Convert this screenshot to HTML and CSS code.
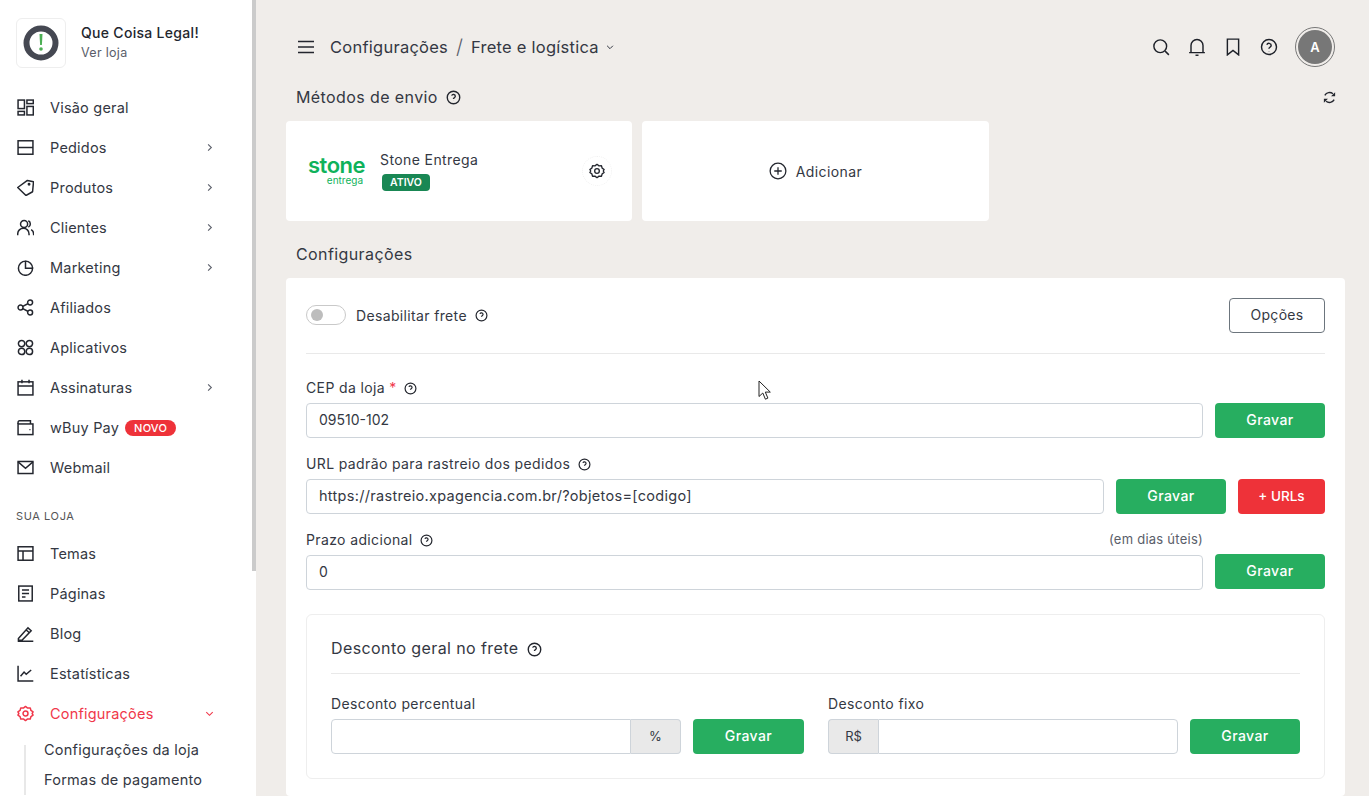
FILE: index.html
```html
<!DOCTYPE html>
<html lang="pt-BR">

<head>
    <meta charset="UTF-8">
    <meta name="viewport" content="width=device-width, initial-scale=1.0">
    <title>Frete e logística</title>
    <link rel="stylesheet" href="styles.css">
</head>

<body>
    <svg class="sprite" width="0" height="0">
        <symbol id="i-help" viewBox="0 0 24 24"><circle cx="12" cy="12" r="10"/><path d="M9.1 9a3 3 0 0 1 5.8 1c0 2-3 2.600-3 4.200"/><path d="M12 17.400v.1"/></symbol>
        <symbol id="i-chev" viewBox="0 0 24 24"><path d="M9 5l7 7-7 7"/></symbol>
        <symbol id="i-down" viewBox="0 0 24 24"><path d="M5 9l7 7 7-7"/></symbol>
        <symbol id="i-gear" viewBox="0 0 24 24"><path stroke-linejoin="round" d="M12 2l3 2.300 3.700-.2 1 3.600 3 2.100-1.300 2.200 1.300 2.200-3 2.100-1 3.600-3.700-.2L12 22l-3-2.300-3.700.2-1-3.600-3-2.100L2.600 12 1.300 9.800l3-2.100 1-3.600 3.700.2z"/><circle cx="12" cy="12" r="3.500"/></symbol>
    </svg>

    <aside class="sidebar">
        <div class="scroll-track"><div class="scroll-thumb"></div></div>
        <div class="store">
            <div class="store-logo">
                <svg width="36" height="36" viewBox="0 0 36 36"><circle cx="18" cy="18" r="14.500" fill="none" stroke="#454852" stroke-width="6"/><path d="M26 27l6 1-1-6z" fill="#454852"/><path d="M16.500 9h3l-.6 11h-1.800z" fill="#4cae54"/><circle cx="18" cy="24" r="1.800" fill="#4cae54"/></svg>
            </div>
            <div class="store-text">
                <div class="store-name">Que Coisa Legal!</div>
                <div class="store-link">Ver loja</div>
            </div>
        </div>

        <nav class="nav">
            <a class="nav-item"><svg class="ico" viewBox="0 0 24 24"><rect x="1.500" y="1.500" width="9" height="12"/><rect x="1.500" y="17.500" width="9" height="5"/><rect x="14" y="1.500" width="9" height="5"/><rect x="14" y="10.500" width="9" height="12"/></svg>Visão geral</a>
            <a class="nav-item"><svg class="ico" viewBox="0 0 24 24"><rect x="1.500" y="2.500" width="21" height="19"/><path d="M1.500 12h21"/></svg>Pedidos<svg class="chev"><use href="#i-chev"/></svg></a>
            <a class="nav-item"><svg class="ico" viewBox="0 0 24 24"><path stroke-linejoin="round" d="M1 12L14.700 2l8.600 2L22 18l-9.300 5.300z"/><circle cx="17" cy="7.500" r="1"/></svg>Produtos<svg class="chev"><use href="#i-chev"/></svg></a>
            <a class="nav-item"><svg class="ico" viewBox="0 0 24 24"><circle cx="10" cy="7" r="5"/><path d="M1 23v-2a8 8 0 0 1 16 0v2"/><path d="M16 2.500a5 5 0 0 1 0 9"/><path d="M20 15a7 7 0 0 1 3.500 6v2"/></svg>Clientes<svg class="chev"><use href="#i-chev"/></svg></a>
            <a class="nav-item"><svg class="ico" viewBox="0 0 24 24"><path d="M12 3a10 10 0 1 0 10 10H12z"/><path d="M12 3a10 10 0 0 1 10 10"/></svg>Marketing<svg class="chev"><use href="#i-chev"/></svg></a>
            <a class="nav-item"><svg class="ico" viewBox="0 0 24 24"><circle cx="18.500" cy="5" r="3.500"/><circle cx="5" cy="12" r="3.500"/><circle cx="18.500" cy="19" r="3.500"/><path d="M8.200 10.300l7-3.600M8.200 13.700l7 3.600"/></svg>Afiliados</a>
            <a class="nav-item"><svg class="ico" viewBox="0 0 24 24"><circle cx="6.500" cy="6.500" r="4.500"/><circle cx="17.500" cy="6.500" r="4.500"/><circle cx="6.500" cy="17.500" r="4.500"/><circle cx="17.500" cy="17.500" r="4.500"/></svg>Aplicativos</a>
            <a class="nav-item"><svg class="ico" viewBox="0 0 24 24"><rect x="1.500" y="4" width="21" height="18.500"/><path d="M1.500 10h21M7 1v5M17 1v5"/></svg>Assinaturas<svg class="chev"><use href="#i-chev"/></svg></a>
            <a class="nav-item"><svg class="ico" viewBox="0 0 24 24"><path d="M1.500 7V4.500a2 2 0 0 1 2-2H19v4.500"/><rect x="1.500" y="7" width="21" height="15"/><path d="M17.500 15h1.500"/></svg>wBuy Pay<span class="badge-new">NOVO</span></a>
            <a class="nav-item"><svg class="ico" viewBox="0 0 24 24"><rect x="1.500" y="3.500" width="21" height="17"/><path d="M1.500 4l10.500 9 10.500-9"/></svg>Webmail</a>

            <div class="nav-section">SUA LOJA</div>

            <a class="nav-item"><svg class="ico" viewBox="0 0 24 24"><rect x="1.500" y="2.500" width="21" height="19"/><path d="M1.500 8.500h21M8.500 8.500v13"/></svg>Temas</a>
            <a class="nav-item"><svg class="ico" viewBox="0 0 24 24"><rect x="2.500" y="1.500" width="19" height="21"/><path d="M7 7h10M7 12h10M7 17h5"/></svg>Páginas</a>
            <a class="nav-item"><svg class="ico" viewBox="0 0 24 24"><path d="M2 19L15.500 4l4.500 4L7 21.500H2zM13 7l4.500 4M1 23h22"/></svg>Blog</a>
            <a class="nav-item"><svg class="ico" viewBox="0 0 24 24"><path d="M1.500 1v21.500H23"/><path d="M5 16l5-6 3 3 7-6"/></svg>Estatísticas</a>
            <a class="nav-item nav-active"><svg class="ico" viewBox="0 0 24 24"><use href="#i-gear"/></svg>Configurações<svg class="chev"><use href="#i-down"/></svg></a>
            <div class="subnav">
                <a class="subnav-item">Configurações da loja</a>
                <a class="subnav-item">Formas de pagamento</a>
            </div>
        </nav>
    </aside>

    <main class="main">
        <header class="topbar">
            <svg class="burger" viewBox="0 0 16 14"><path d="M0 1.500h16M0 7h16M0 12.500h16"/></svg>
            <span class="crumb">Configurações</span>
            <span class="crumb-sep">/</span>
            <span class="crumb">Frete e logística</span>
            <svg class="crumb-down"><use href="#i-down"/></svg>
            <div class="top-actions">
                <svg class="top-ico" viewBox="0 0 24 24"><circle cx="11" cy="11" r="8.500"/><path d="M17.500 17.500l5 5"/></svg>
                <svg class="top-ico" viewBox="0 0 24 24"><path d="M1.500 19.500h21M4 19.500V10a8 8 0 0 1 16 0v9.500"/><path d="M10 23h4"/></svg>
                <svg class="top-ico" viewBox="0 0 24 24"><path d="M4.500 1.500h15v21L12 16.500l-7.500 6z"/></svg>
                <svg class="top-ico" viewBox="0 0 24 24"><use href="#i-help"/></svg>
                <div class="avatar"><span>A</span></div>
            </div>
        </header>

        <div class="section-head">
            <h2 class="section-title">Métodos de envio</h2>
            <svg class="help help-lg"><use href="#i-help"/></svg>
            <svg class="refresh" viewBox="0 0 24 24"><path d="M4.500 8.500a8.500 8.500 0 0 1 13-2.500"/><path d="M19.500 15.500a8.500 8.500 0 0 1-13 2.500"/><path class="refresh-tip" d="M21 3.500V10h-6.500z"/><path class="refresh-tip" d="M3 20.500V14h6.500z"/></svg>
        </div>

        <div class="methods">
            <div class="method-card">
                <div class="stone">
                    <div class="stone-name">stone</div>
                    <div class="stone-sub">entrega</div>
                </div>
                <div>
                    <div class="method-name">Stone Entrega</div>
                    <span class="badge-on">ATIVO</span>
                </div>
                <div class="method-gear-wrap"><svg class="method-gear"><use href="#i-gear"/></svg></div>
            </div>
            <div class="method-card method-add">
                <svg class="add-ico" viewBox="0 0 24 24"><circle cx="12" cy="12" r="10.500"/><path d="M12 7v10M7 12h10"/></svg>
                Adicionar
            </div>
        </div>

        <h2 class="section-title config-title">Configurações</h2>

        <section class="panel">
            <div class="panel-top">
                <span class="toggle"><span class="toggle-dot"></span></span>
                <span class="toggle-label">Desabilitar frete</span>
                <svg class="help"><use href="#i-help"/></svg>
                <button class="btn-outline">Opções</button>
            </div>

            <div class="field field-first">
                <label class="label">CEP da loja <span class="req">*</span> <svg class="help"><use href="#i-help"/></svg></label>
                <div class="row">
                    <input class="input input-num" value="09510-102">
                    <button class="btn btn-green">Gravar</button>
                </div>
            </div>

            <div class="field">
                <label class="label">URL padrão para rastreio dos pedidos <svg class="help"><use href="#i-help"/></svg></label>
                <div class="row">
                    <input class="input" value="https://rastreio.xpagencia.com.br/?objetos=[codigo]">
                    <button class="btn btn-green">Gravar</button>
                    <button class="btn btn-red">+ URLs</button>
                </div>
            </div>

            <div class="field">
                <div class="label-row">
                    <label class="label">Prazo adicional <svg class="help"><use href="#i-help"/></svg></label>
                    <span class="label-note">(em dias úteis)</span>
                </div>
                <div class="row">
                    <input class="input input-num" value="0">
                    <button class="btn btn-green btn-up">Gravar</button>
                </div>
            </div>

            <div class="subcard">
                <h3 class="subcard-title">Desconto geral no frete <svg class="help help-lg"><use href="#i-help"/></svg></h3>
                <div class="discount-cols">
                    <div>
                        <label class="label">Desconto percentual</label>
                        <div class="row">
                            <div class="group">
                                <input class="input input-in-group">
                                <span class="addon addon-right">%</span>
                            </div>
                            <button class="btn btn-green btn-wide">Gravar</button>
                        </div>
                    </div>
                    <div>
                        <label class="label">Desconto fixo</label>
                        <div class="row">
                            <div class="group">
                                <span class="addon addon-left">R$</span>
                                <input class="input input-in-group">
                            </div>
                            <button class="btn btn-green">Gravar</button>
                        </div>
                    </div>
                </div>
            </div>
        </section>
    </main>

    <svg class="cursor" width="14" height="21" viewBox="0 0 14 21"><path d="M1 1v15.500l3.800-3.500 2.600 6.200 2.500-1.100-2.600-6h5z" fill="#fff" stroke="#222" stroke-width="1"/></svg>
</body>

</html>
```

FILE: styles.css
```css
* {
    margin: 0;
    padding: 0;
    box-sizing: border-box;
}

html,
body {
    height: 796px;
    overflow: hidden;
}

body {
    display: flex;
    background-color: #f0edea;
    color: #343843;
    font-family: Inter, "Noto Sans", sans-serif;
    font-size: 14px;
}

.sprite {
    position: absolute;
}

svg {
    fill: none;
    stroke: currentColor;
}

/* sidebar */
.sidebar {
    position: relative;
    width: 256px;
    height: 796px;
    flex-shrink: 0;
    overflow: hidden;
    background-color: #fff;
    padding: 18px 0 0 16px;
}

.scroll-track {
    position: absolute;
    top: 0;
    right: 0;
    width: 4px;
    height: 796px;
}

.scroll-thumb {
    height: 571px;
    background-color: #cbcbcb;
}

.store {
    display: flex;
    align-items: center;
    gap: 15px;
}

.store-logo {
    width: 50px;
    height: 50px;
    border: 1px solid #eee;
    border-radius: 6px;
    display: flex;
    justify-content: center;
    align-items: center;
}

.store-logo svg {
    stroke: none;
}

.store-text {
    padding-bottom: 3px;
}

.store-name {
    font-size: 14px;
    font-weight: 500;
    letter-spacing: 0.3px;
    color: #23262e;
    margin-bottom: 4px;
}

.store-link {
    font-size: 12.5px;
    letter-spacing: 0.3px;
    color: #5a5e6a;
}

.nav {
    margin-top: 20px;
}

.nav-item {
    display: flex;
    align-items: center;
    height: 40px;
    width: 199px;
    padding-bottom: 1px;
    font-size: 14.5px;
    letter-spacing: 0.2px;
}

.ico {
    width: 17px;
    height: 17px;
    margin: 0 16px 0 1px;
    stroke-width: 2.1;
    color: #23262e;
}

.chev {
    width: 11px;
    height: 11px;
    margin-left: auto;
    stroke-width: 2.4;
    color: #5d616c;
}

.badge-new {
    margin-left: 6px;
    padding: 0 9px;
    height: 16px;
    line-height: 16px;
    border-radius: 8px;
    background-color: #ee3239;
    color: #fff;
    font-size: 11px;
    font-weight: 500;
}

.nav-section {
    margin: 20px 0 10px;
    height: 16px;
    font-size: 11px;
    line-height: 16px;
    letter-spacing: 0.6px;
    color: #555;
}

.nav-active,
.nav-active .ico,
.nav-active .chev {
    color: #f0384a;
}

.subnav {
    position: relative;
    margin: 1px 0 0 8px;
    padding-left: 20px;
}

.subnav::before {
    content: "";
    position: absolute;
    top: 10px;
    bottom: 0;
    left: 0;
    width: 2px;
    background-color: #e8e8e8;
}

.subnav-item {
    display: block;
    height: 30px;
    line-height: 30px;
    font-size: 14.5px;
    letter-spacing: 0.25px;
    white-space: nowrap;
}

/* main area */
.main {
    flex: 1;
    min-width: 0;
    height: 796px;
    overflow: hidden;
    padding: 0 24px 0 30px;
}

.topbar {
    display: flex;
    align-items: center;
    height: 74px;
    padding: 20px 10px 0 12px;
}

.burger {
    width: 16px;
    height: 14px;
    margin-right: 16px;
    stroke-width: 1.6;
    color: #23262e;
}

.crumb {
    font-size: 16.5px;
    letter-spacing: 0.25px;
}

.crumb-sep {
    margin: 0 8px;
    font-size: 20px;
    font-weight: 300;
    color: #5a5e6a;
}

.crumb-down {
    width: 10px;
    height: 10px;
    margin-left: 6px;
    stroke-width: 2.4;
}

.top-actions {
    display: flex;
    align-items: center;
    margin-left: auto;
    gap: 18px;
}

.top-ico {
    width: 18px;
    height: 18px;
    stroke-width: 1.9;
    color: #1d2028;
}

.avatar {
    width: 40px;
    height: 40px;
    margin-left: -1px;
    border: 1px solid #777;
    border-radius: 50%;
    padding: 2px;
    background-color: #f0edea;
}

.avatar span {
    display: block;
    height: 100%;
    border-radius: 50%;
    background-color: #777;
    color: #fff;
    font-size: 13px;
    font-weight: 600;
    line-height: 34px;
    text-align: center;
}

.section-head {
    display: flex;
    align-items: center;
    gap: 8px;
    height: 47px;
    padding: 0 8px 0 10px;
}

.section-head .section-title {
    padding-bottom: 2px;
}

.section-title {
    font-size: 16px;
    font-weight: 400;
    letter-spacing: 0.4px;
}

.help {
    width: 13px;
    height: 13px;
    stroke-width: 2.2;
    vertical-align: -2px;
    color: #23262e;
}

.help-lg {
    width: 15px;
    height: 15px;
    vertical-align: -3px;
}

.refresh {
    width: 15px;
    height: 15px;
    margin-left: auto;
    stroke-width: 2.2;
    color: #23262e;
}

.refresh-tip {
    fill: #23262e;
    stroke: none;
}

.methods {
    display: flex;
    gap: 10px;
}

.method-card {
    display: flex;
    align-items: center;
    width: 346px;
    height: 100px;
    background-color: #fff;
    border-radius: 4px;
    padding: 0 20px 0 22px;
}

.stone {
    width: 72px;
    flex-shrink: 0;
    padding-right: 17px;
    text-align: right;
    color: #0fb25b;
}

.stone-name {
    font-size: 22px;
    font-weight: 600;
    line-height: 19px;
    letter-spacing: -0.5px;
}

.stone-sub {
    font-size: 10px;
    line-height: 11px;
}

.method-name {
    font-size: 14px;
    line-height: 15px;
    letter-spacing: 0.4px;
    margin-bottom: 7px;
}

.badge-on {
    display: block;
    width: 48px;
    margin-left: 2px;
    height: 17px;
    line-height: 17px;
    border-radius: 4px;
    background-color: #198754;
    color: #fff;
    font-size: 10.5px;
    font-weight: 600;
    text-align: center;
}

.method-gear-wrap {
    display: flex;
    justify-content: center;
    align-items: center;
    width: 30px;
    height: 30px;
    margin-left: auto;
    border: 1px dotted #f0f0f0;
    border-radius: 50%;
}

.method-gear {
    width: 16px;
    height: 16px;
    stroke-width: 2;
    color: #23262e;
}

.method-add {
    width: 347px;
    justify-content: center;
    gap: 9px;
    padding: 0;
    font-size: 14px;
    letter-spacing: 0.4px;
}

.add-ico {
    width: 18px;
    height: 18px;
    stroke-width: 1.7;
    color: #23262e;
}

.config-title {
    margin: 24px 0 14px 10px;
    line-height: 19px;
}

.panel {
    background-color: #fff;
    border-radius: 4px;
    height: 518px;
    padding: 20px;
}

.panel-top {
    display: flex;
    align-items: center;
    height: 56px;
    padding-bottom: 21px;
    border-bottom: 1px solid #e9e9e9;
}

.toggle {
    width: 40px;
    height: 20px;
    border: 1px solid #c9c9c9;
    border-radius: 10px;
    padding: 3px 4px;
    margin-right: 10px;
}

.toggle-dot {
    display: block;
    width: 12px;
    height: 12px;
    border-radius: 50%;
    background-color: #bdbdbd;
}

.toggle-label {
    font-size: 14px;
    letter-spacing: 0.35px;
    margin-right: 8px;
}

.btn-outline {
    margin-left: auto;
    width: 96px;
    height: 35px;
    padding-bottom: 1px;
    background: #fff;
    border: 1px solid #6c757d;
    border-radius: 4px;
    color: #343843;
    font: inherit;
    font-size: 14px;
    letter-spacing: 0.3px;
}

.field {
    margin-top: 17px;
}

.field-first {
    margin-top: 25px;
}

.label {
    display: block;
    height: 19px;
    line-height: 17px;
    margin-bottom: 5px;
    font-size: 14px;
    letter-spacing: 0.37px;
}

.label .help {
    margin-left: 3px;
}

.req {
    color: #f0384a;
}

.label-row {
    display: flex;
    justify-content: space-between;
    padding-right: 122px;
}

.label-note {
    font-size: 13px;
    line-height: 17px;
    letter-spacing: 0.25px;
    color: #5a5e6a;
}

.row {
    display: flex;
    gap: 12px;
}

.input {
    flex: 1;
    min-width: 0;
    height: 35px;
    border: 1px solid #ced4da;
    border-radius: 4px;
    padding: 0 12px 2px;
    color: #343843;
    font: inherit;
    font-size: 14.5px;
    letter-spacing: 0.3px;
    outline: none;
}

.input-num {
    font-size: 14px;
    letter-spacing: 0;
}

.btn {
    height: 35px;
    padding-bottom: 2px;
    border: none;
    border-radius: 4px;
    color: #fff;
    font: inherit;
    font-size: 14px;
    font-weight: 500;
    letter-spacing: 0.4px;
}

.btn-green {
    width: 110px;
    background-color: #27ae60;
}

.btn-wide {
    width: 111px;
}

.btn-up {
    margin-top: -1px;
}

.btn-red {
    width: 87px;
    background-color: #ee3239;
    font-size: 13.5px;
    letter-spacing: 0;
}

.subcard {
    margin-top: 24px;
    height: 165px;
    border: 1px solid #eee;
    border-radius: 6px;
    padding: 0 24px;
}

.subcard-title {
    height: 59px;
    line-height: 66px;
    font-size: 16px;
    font-weight: 400;
    letter-spacing: 0.4px;
    border-bottom: 1px solid #e9e9e9;
}

.subcard-title .help {
    margin-left: 4px;
}

.discount-cols {
    display: grid;
    grid-template-columns: 473px 472px;
    gap: 24px;
    margin-top: 21px;
}

.group {
    flex: 1;
    display: flex;
}

.input-in-group {
    border-radius: 4px 0 0 4px;
}

.addon {
    flex-shrink: 0;
    width: 50px;
    height: 35px;
    line-height: 32px;
    text-align: center;
    background-color: #e9e9e9;
    border: 1px solid #ced4da;
    font-size: 13px;
}

.addon-right {
    border-left: none;
    border-radius: 0 4px 4px 0;
}

.addon-left {
    border-right: none;
    border-radius: 4px 0 0 4px;
}

.addon-left + .input-in-group {
    border-radius: 0 4px 4px 0;
}

.cursor {
    position: absolute;
    left: 758px;
    top: 380px;
    stroke: none;
}
```
